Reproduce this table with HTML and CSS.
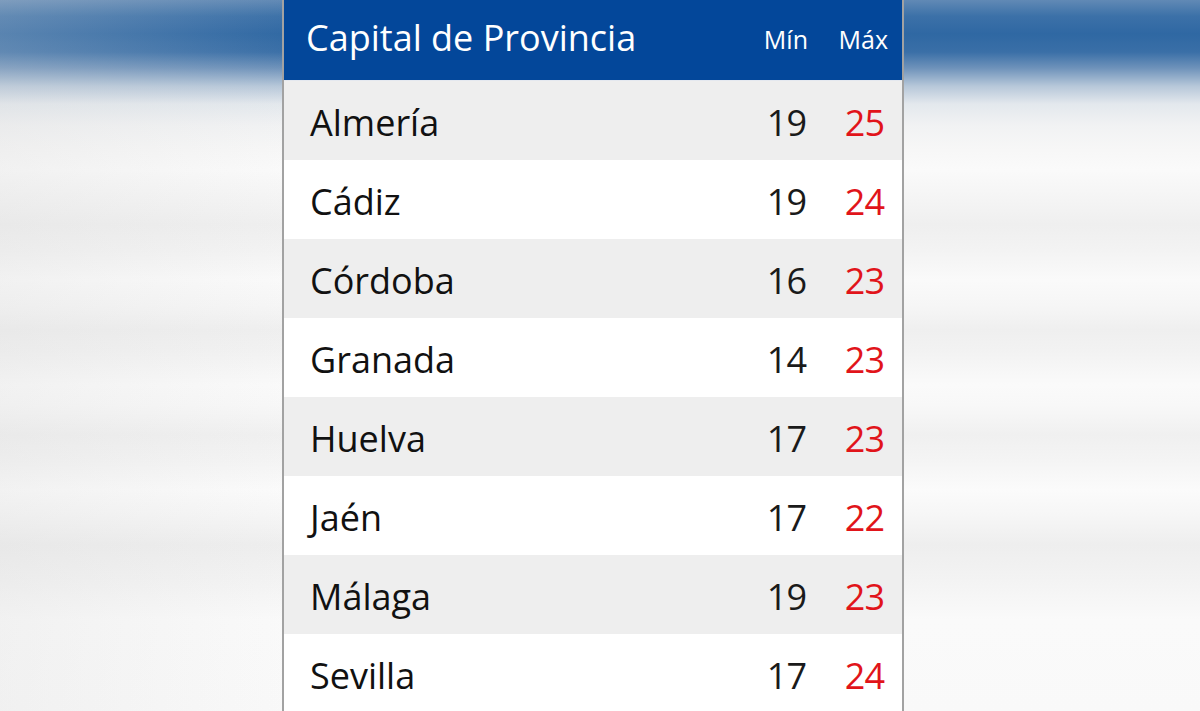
FILE: index.html
```html
<!DOCTYPE html>
<html lang="es">
<head>
<meta charset="utf-8">
<title>Capital de Provincia</title>
<link rel="stylesheet" href="styles.css">
</head>
<body>
<div class="page">
  <div class="backdrop"></div>
  <table class="temps">
    <colgroup>
      <col class="c-city">
      <col class="c-min">
      <col class="c-max">
    </colgroup>
    <thead>
      <tr>
        <th class="city">Capital de Provincia</th>
        <th class="num min-h">Mín</th>
        <th class="num max-h">Máx</th>
      </tr>
    </thead>
    <tbody>
      <tr><td class="city">Almería</td><td class="min">19</td><td class="max">25</td></tr>
      <tr><td class="city">Cádiz</td><td class="min">19</td><td class="max">24</td></tr>
      <tr><td class="city">Córdoba</td><td class="min">16</td><td class="max">23</td></tr>
      <tr><td class="city">Granada</td><td class="min">14</td><td class="max">23</td></tr>
      <tr><td class="city">Huelva</td><td class="min">17</td><td class="max">23</td></tr>
      <tr><td class="city">Jaén</td><td class="min">17</td><td class="max">22</td></tr>
      <tr><td class="city">Málaga</td><td class="min">19</td><td class="max">23</td></tr>
      <tr><td class="city">Sevilla</td><td class="min">17</td><td class="max">24</td></tr>
    </tbody>
  </table>
</div>
</body>
</html>
```
FILE: styles.css
```css
html, body {
  margin: 0;
  padding: 0;
}
body {
  width: 1200px;
  height: 711px;
  overflow: hidden;
  font-family: "Open Sans", "Liberation Sans", sans-serif;
}
.page {
  position: relative;
  width: 1200px;
  height: 711px;
  overflow: hidden;
  background: #f6f6f6;
}
.backdrop {
  position: absolute;
  inset: 0;
  background:
    linear-gradient(180deg,
      #6189b5 0px,
      #3c71a8 16px,
      #2f68a3 34px,
      #3a6fa7 52px,
      #6e92ba 68px,
      #b6c7d9 86px,
      #e3e8ed 104px,
      #f1f2f3 125px,
      #f7f7f7 150px,
      #fafafa 170px,
      #f4f4f4 200px,
      #efefef 225px,
      #f3f3f3 250px,
      #fafafa 280px,
      #f6f6f6 305px,
      #efefef 330px,
      #f2f2f2 350px,
      #fafafa 385px,
      #f8f8f8 405px,
      #f0f0f0 435px,
      #f4f4f4 460px,
      #fbfbfb 490px,
      #f6f6f6 515px,
      #eeeeee 545px,
      #f3f3f3 580px,
      #fafafa 620px,
      #f9f9f9 711px);
}
.backdrop::after {
  content: "";
  position: absolute;
  inset: 0;
  background: linear-gradient(90deg, rgba(215,215,215,0.25) 0%, rgba(255,255,255,0) 25%, rgba(255,255,255,0) 100%);
}
.temps {
  position: relative;
  margin-left: 282px;
  width: 622px;
  table-layout: fixed;
  border-collapse: separate;
  border-spacing: 0;
  border-left: 2px solid #a2a2a2;
  border-right: 2px solid #a2a2a2;
  background: #fff;
}
.c-min {
  width: 82px;
}
.c-max {
  width: 76px;
}
.temps th {
  background: #03479a;
  color: #fff;
  font-weight: 400;
  height: 74px;
  padding: 0 0 6px 0;
  border-bottom: 1px solid #e4e8ef;
  vertical-align: middle;
}
.temps th.city {
  text-align: left;
  padding-left: 22px;
  font-size: 36px;
}
.temps th.num {
  font-size: 25px;
  text-align: right;
  padding-top: 4px;
  height: 70px;
}
.temps th.min-h {
  padding-right: 18px;
}
.temps th.max-h {
  padding-right: 14px;
}
.temps td {
  height: 79px;
  padding: 3px 0 0 0;
  box-sizing: border-box;
  font-size: 36px;
  color: #111;
  vertical-align: middle;
}
.temps tbody tr:nth-child(odd) td {
  background: #eeeeee;
}
.temps td.city {
  padding-left: 26px;
}
.temps td.min {
  text-align: right;
  padding-right: 20px;
  color: #1a1a1a;
  letter-spacing: -1px;
}
.temps td.max {
  text-align: right;
  padding-right: 18px;
  color: #e1141a;
  letter-spacing: -1px;
}
```
